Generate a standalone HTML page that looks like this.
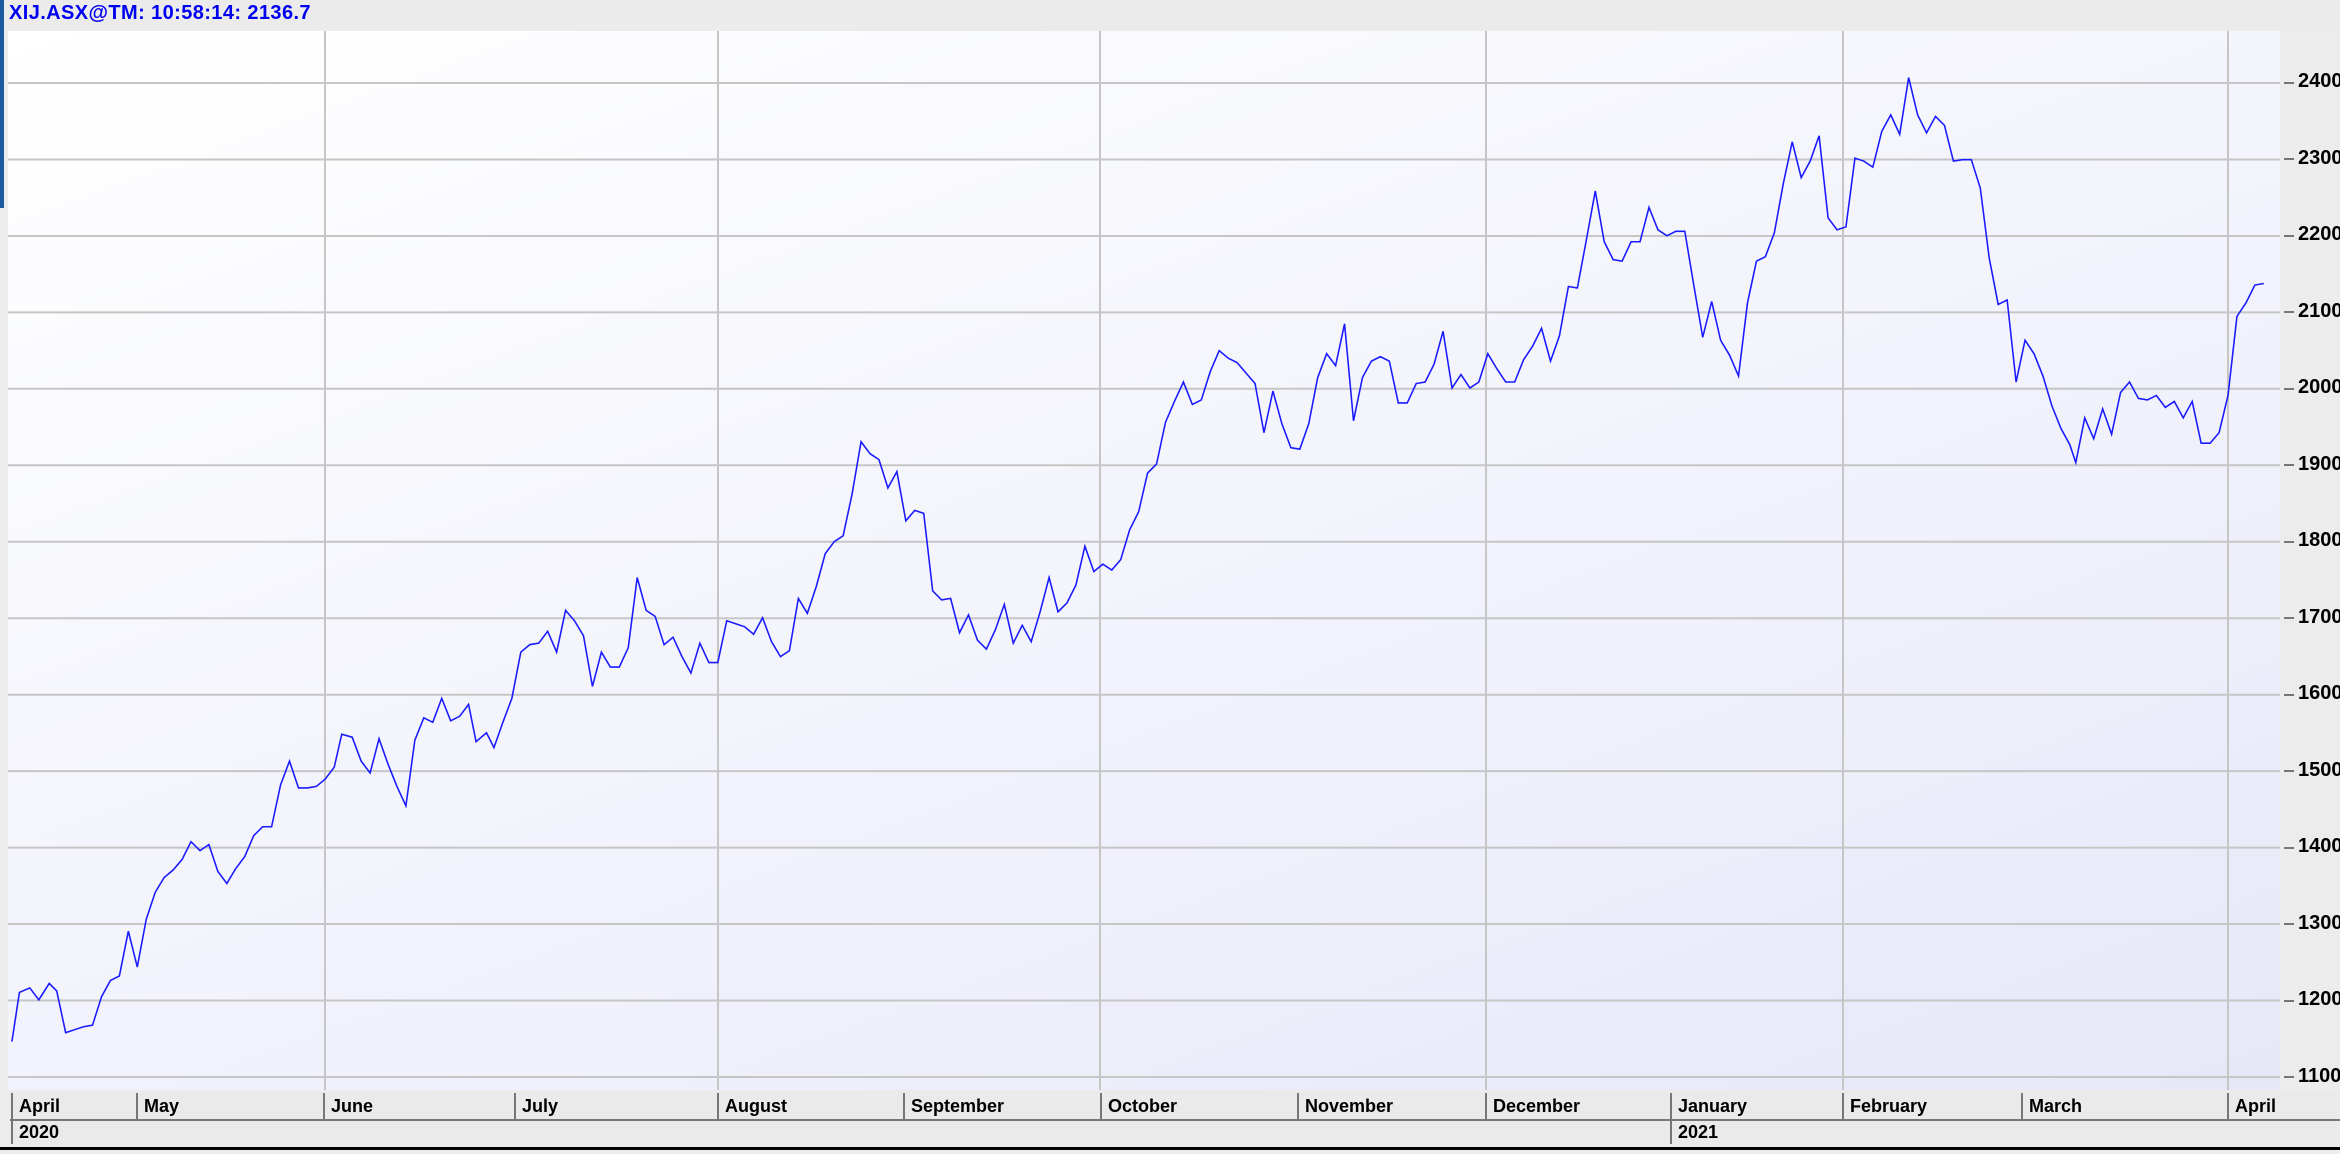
<!DOCTYPE html>
<html><head><meta charset="utf-8"><style>
html,body{margin:0;padding:0;width:2340px;height:1154px;overflow:hidden;background:#ececec;font-family:"Liberation Sans",sans-serif}
#hdr{position:absolute;left:0;top:0;width:2340px;height:30px;background:#ebebeb}
#hdr span{position:absolute;left:9px;top:2px;font-weight:bold;font-size:20px;color:#0000f0;letter-spacing:0.4px}
#blue{position:absolute;left:0;top:0;width:4px;height:208px;background:#1a5aa0}
#plot{position:absolute;left:8px;top:31px;width:2272px;height:1059px;background:linear-gradient(160deg,#ffffff 0%,#f3f4fc 50%,#e6e8f8 100%)}
.lbl{position:absolute;left:2298px;font-weight:bold;font-size:20px;color:#000}
.tick{position:absolute;left:2284px;width:10px;height:2px;background:#777}
.m{position:absolute;top:1093px;height:26px;border-left:2px solid #777;font-weight:bold;font-size:18px;padding-left:6px;line-height:26px}
#row1{position:absolute;left:10px;top:1091px;width:2330px;height:28px;background:#eaeaea;border-bottom:2px solid #777}
#row2{position:absolute;left:10px;top:1121px;width:2330px;height:24px;background:#eaeaea}
#bl{position:absolute;left:0;top:1147px;width:2340px;height:3px;background:#000}
</style></head><body>
<div id="hdr"><span>XIJ.ASX@TM: 10:58:14: 2136.7</span></div>
<div id="blue"></div>
<div id="plot"></div>
<svg style="position:absolute;left:0;top:0" width="2340" height="1154">
<g stroke="#c6c6c6" stroke-width="2">
<line x1="8" x2="2280" y1="83" y2="83"/><line x1="8" x2="2280" y1="159.5" y2="159.5"/><line x1="8" x2="2280" y1="236" y2="236"/><line x1="8" x2="2280" y1="312.4" y2="312.4"/><line x1="8" x2="2280" y1="388.8" y2="388.8"/><line x1="8" x2="2280" y1="465.3" y2="465.3"/><line x1="8" x2="2280" y1="541.8" y2="541.8"/><line x1="8" x2="2280" y1="618.2" y2="618.2"/><line x1="8" x2="2280" y1="694.7" y2="694.7"/><line x1="8" x2="2280" y1="771.1" y2="771.1"/><line x1="8" x2="2280" y1="847.6" y2="847.6"/><line x1="8" x2="2280" y1="924" y2="924"/><line x1="8" x2="2280" y1="1000.5" y2="1000.5"/><line x1="8" x2="2280" y1="1077" y2="1077"/>
<line x1="325" x2="325" y1="31" y2="1090"/><line x1="718" x2="718" y1="31" y2="1090"/><line x1="1100" x2="1100" y1="31" y2="1090"/><line x1="1486" x2="1486" y1="31" y2="1090"/><line x1="1843" x2="1843" y1="31" y2="1090"/><line x1="2228" x2="2228" y1="31" y2="1090"/>
</g>
<g transform="scale(1.4923)"><polyline fill="none" stroke="#1a1aff" stroke-width="1.05" points="8,698 13,665 20,662 26,670 33,659 38,664 44,692 50,690 56,688 62,687 68,668 74,657 80,654 86,624 92,648 98,616 104,598 110,588 116,583 122,576 128,564 134,570 140,566 146,584 152,592 158,582 164,574 170,560 176,554 182,554 188,526 194,510 200,528 206,528 212,527 218,522 224,514 229,492 236,494 242,510 248,518 254,495 260,512 266,527 272,540 278,496 284,481 290,484 296,468 302,483 308,480 314,472 319,497 326,491 331,501 337,484 343,468 349,437 355,432 361,431 367,423 373,437 379,409 385,416 391,426 397,460 403,437 409,447 415,447 421,434 427,387 433,409 439,413 445,432 451,427 457,440 463,451 469,431 475,444 481,444 487,416 493,418 499,420 505,425 511,414 517,430 523,440 529,436 535,401 541,411 547,393 553,371 559,363 565,359 571,331 577,296 583,304 589,308 595,327 601,316 607,349 613,342 619,344 625,396 631,402 637,401 643,424 649,412 655,429 661,435 667,422 673,405 679,431 685,419 691,430 697,410 703,387 709,410 715,404 721,392 727,366 733,383 739,378 745,382 751,375 757,355 763,343 769,317 775,311 781,283 787,269 793,256 799,271 805,268 811,249 817,235 823,240 829,243 835,250 841,257 847,290 853,262 859,284 865,300 871,301 877,284 883,253 889,237 895,245 901,217 907,282 913,253 919,242 925,239 931,242 937,270 943,270 949,257 955,256 961,244 967,222 973,260 979,251 985,260 991,256 997,237 1003,247 1009,256 1015,256 1021,241 1027,232 1033,220 1039,242 1045,225 1051,192 1057,193 1063,161 1069,128 1075,162 1081,174 1087,175 1093,162 1099,162 1105,139 1111,154 1117,158 1123,155 1129,155 1135,191 1141,226 1147,202 1153,228 1159,238 1165,252 1171,203 1177,175 1183,172 1189,156 1195,123 1201,95 1207,119 1213,108 1219,91 1225,146 1231,154 1237,152 1243,106 1249,108 1255,112 1261,88 1267,77 1273,90 1279,52 1285,77 1291,89 1297,78 1303,84 1309,108 1315,107 1321,107 1327,126 1333,173 1339,204 1345,201 1351,256 1357,228 1363,237 1369,252 1375,272 1381,287 1387,298 1391,310 1397,280 1403,294 1409,274 1415,291 1421,263 1427,256 1433,267 1439,268 1445,265 1451,273 1457,269 1463,280 1469,269 1475,297 1481,297 1487,290 1493,265 1499,212 1505,203 1511,191 1517,190"/></g>
</svg>
<div class="tick" style="top:82px"></div><div class="lbl" style="top:70px">2400</div>
<div class="tick" style="top:158px"></div><div class="lbl" style="top:147px">2300</div>
<div class="tick" style="top:235px"></div><div class="lbl" style="top:223px">2200</div>
<div class="tick" style="top:311px"></div><div class="lbl" style="top:300px">2100</div>
<div class="tick" style="top:388px"></div><div class="lbl" style="top:376px">2000</div>
<div class="tick" style="top:464px"></div><div class="lbl" style="top:453px">1900</div>
<div class="tick" style="top:541px"></div><div class="lbl" style="top:529px">1800</div>
<div class="tick" style="top:617px"></div><div class="lbl" style="top:606px">1700</div>
<div class="tick" style="top:694px"></div><div class="lbl" style="top:682px">1600</div>
<div class="tick" style="top:770px"></div><div class="lbl" style="top:759px">1500</div>
<div class="tick" style="top:847px"></div><div class="lbl" style="top:835px">1400</div>
<div class="tick" style="top:923px"></div><div class="lbl" style="top:912px">1300</div>
<div class="tick" style="top:1000px"></div><div class="lbl" style="top:988px">1200</div>
<div class="tick" style="top:1076px"></div><div class="lbl" style="top:1065px">1100</div>
<div id="row1"></div><div id="row2"></div>
<div class="m" style="left:11px">April</div><div class="m" style="left:136px">May</div><div class="m" style="left:323px">June</div><div class="m" style="left:514px">July</div><div class="m" style="left:717px">August</div><div class="m" style="left:903px">September</div><div class="m" style="left:1100px">October</div><div class="m" style="left:1297px">November</div><div class="m" style="left:1485px">December</div><div class="m" style="left:1670px">January</div><div class="m" style="left:1842px">February</div><div class="m" style="left:2021px">March</div><div class="m" style="left:2227px">April</div>
<div class="m" style="left:11px;top:1120px;height:24px;line-height:24px">2020</div><div class="m" style="left:1670px;top:1120px;height:24px;line-height:24px">2021</div>
<div id="bl"></div>
</body></html>
